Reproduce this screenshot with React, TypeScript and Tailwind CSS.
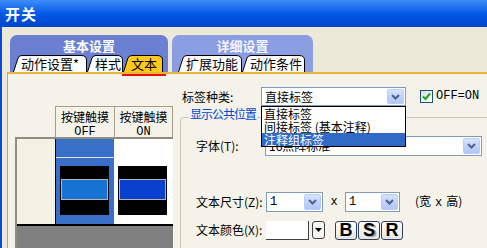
import React from "react";

function Tab({ label, w, className, active }: { label: string; w: number; className: string; active?: boolean }) {
  const d = `M0.5 17 L5 3 Q6 0.5 9 0.5 L${w - 6} 0.5 Q${w - 0.5} 0.5 ${w - 0.5} 5 L${w - 0.5} 17`;
  return (
    <div className={`relative h-[17px] shrink-0 ${className}`}>
      <svg className="absolute inset-0" width={w} height={17}>
        <path d={d} fill={active ? "#FFC81E" : "#FFFFFF"} stroke="#000" strokeWidth="1" />
      </svg>
      <span className="relative block pl-[8px] leading-[17px] text-[13px] whitespace-nowrap">{label}</span>
    </div>
  );
}

function Arrow() {
  return (
    <div className="w-[17px] shrink-0 rounded-[2px] border border-[#B9CDF8] bg-gradient-to-b from-[#D6E2FD] to-[#B0C6F6] flex items-center justify-center">
      <svg width="9" height="6" viewBox="0 0 9 6">
        <path d="M1 1 L4.5 4.5 L8 1" stroke="#4D6185" strokeWidth="2" fill="none" />
      </svg>
    </div>
  );
}

function Combo({ text, className, mono }: { text: string; className: string; mono?: boolean }) {
  return (
    <div className={`flex shrink-0 border border-[#7F9DB9] bg-white p-[1px] ${className}`}>
      <span className={`flex-1 pl-[2px] leading-[16px] whitespace-nowrap overflow-hidden ${mono ? "font-['Liberation_Mono',monospace]" : ""}`}>{text}</span>
      <Arrow />
    </div>
  );
}

function Swatch({ bar }: { bar: string }) {
  return (
    <div className="w-[49px] h-[49px] bg-black pt-[13px] px-[1px]">
      <div className={`h-[21px] border border-[#B4B4B4] ${bar}`} />
    </div>
  );
}

function StyleButton({ children, shadow }: { children: React.ReactNode; shadow?: boolean }) {
  return (
    <div
      className={`w-[22px] h-[19px] rounded-[3px] border border-[#2B3F5F] bg-gradient-to-b from-white to-[#E4E4DE] flex items-center justify-center font-['Liberation_Sans',sans-serif] font-black text-[18px] leading-none ${shadow ? "[text-shadow:2px_1px_0_#9A9A9A]" : ""}`}
    >
      {children}
    </div>
  );
}

export default function App() {
  return (
    <div className="w-[487px] h-[248px] overflow-hidden bg-[#ECE9D8] flex flex-col font-['Noto_Sans_CJK_SC',sans-serif] text-[12px] text-black">
      {/* title bar */}
      <div className="h-[27px] shrink-0 bg-gradient-to-b from-[#3D8DF6] via-[#0058E6] to-[#0044CC] flex items-center pl-[5px]">
        <span className="text-white font-bold text-[15px] leading-none tracking-[1px]">开关</span>
      </div>

      <div className="flex-1 min-h-0 flex flex-col border-l-2 border-[#0A4AD8]">
        {/* tab groups */}
        <div className="flex gap-[4px] pl-[8px] pt-[8px] shrink-0">
          <div className="w-[158px] h-[37px] rounded-t-[7px] bg-[#6B80D3] flex flex-col">
            <div className="h-[20px] text-center text-white font-bold leading-[21px] text-[13px]">基本设置</div>
            <div className="flex pl-[3px]">
              <Tab w={74} className="w-[74px]" label="动作设置*" />
              <Tab w={36} className="w-[36px]" label="样式" />
              <Tab w={40} className="w-[40px]" label="文本" active />
            </div>
          </div>
          <div className="w-[141px] h-[37px] rounded-t-[7px] bg-[#8C9EE2] flex flex-col">
            <div className="h-[20px] text-center text-[#F4F6FF] font-bold leading-[21px] text-[13px]">详细设置</div>
            <div className="flex pl-[6px]">
              <Tab w={64} className="w-[64px]" label="扩展功能" />
              <Tab w={63} className="w-[63px]" label="动作条件" />
            </div>
          </div>
        </div>

        {/* panel */}
        <div className="flex-1 min-h-0 ml-[5px] border-l border-t-2 border-l-[#A9A79A] border-t-[#E9B73A] bg-[#F5F3E9] relative flex">
          <div className="absolute top-0 left-[114px] w-[44px] h-[2px] bg-[#E8120C]" />

          {/* preview table */}
          <div className="w-[165px] shrink-0 pl-[7px] pt-[32px] flex flex-col">
            <div className="ml-[40px] w-[118px] h-[31px] flex border border-b-0 border-[#A39F8C]">
              <div className="w-[59px] border-r border-[#A39F8C] text-center leading-[13px] pt-[3px]">
                按键触摸<br /><span className="font-['Liberation_Mono',monospace]">OFF</span>
              </div>
              <div className="flex-1 text-center leading-[13px] pt-[3px]">
                按键触摸<br /><span className="font-['Liberation_Mono',monospace]">ON</span>
              </div>
            </div>
            <div className="flex-1 w-[158px] border-t-2 border-l-2 border-[#8F8C80] bg-[#808080] flex flex-col">
              <div className="h-[87px] flex border-b-2 border-black">
                <div className="w-[39px] bg-[#F3F1E4] border-r border-black" />
                <div className="w-[58px] bg-[#3A6FC8] flex flex-col">
                  <div className="h-[18px]" />
                  <div className="h-[1px] bg-[#DCE6F6]" />
                  <div className="flex-1 pl-[4px] pt-[8px]">
                    <Swatch bar="bg-[#1673D2]" />
                  </div>
                </div>
                <div className="flex-1 bg-white flex flex-col">
                  <div className="h-[19px]" />
                  <div className="flex-1 pl-[4px] pt-[8px]">
                    <Swatch bar="bg-[#0A40CE]" />
                  </div>
                </div>
              </div>
            </div>
          </div>

          {/* form */}
          <div className="flex-1 min-w-0 pl-[7px] pt-[13px] flex flex-col relative">
            <div className="flex items-center h-[19px] pl-[2px]">
              <span className="w-[79px] shrink-0 leading-[19px]">标签种类:</span>
              <Combo text="直接标签" className="w-[145px] h-[19px]" />
              <div className="ml-[14px] w-[13px] h-[13px] border border-[#1C5180] bg-gradient-to-br from-[#DCDCD7] to-white flex items-center justify-center">
                <svg width="9" height="9" viewBox="0 0 9 9">
                  <path d="M1 4.5 L3.5 7 L8 1.5" stroke="#21A121" strokeWidth="2" fill="none" />
                </svg>
              </div>
              <span className="ml-[3px] text-[12px] leading-[19px] whitespace-nowrap font-['Liberation_Mono',monospace]">OFF=ON</span>
            </div>

            {/* open list */}
            <div className="absolute left-[88px] top-[32px] w-[145px] border border-black bg-white z-10 text-[12px]">
              <div className="h-[13px] flex items-center pl-[2px] whitespace-nowrap">
                <span className="leading-none">直接标签</span>
              </div>
              <div className="h-[13px] flex items-center pl-[2px] whitespace-nowrap">
                <span className="leading-none">间接标签 (基本注释)</span>
              </div>
              <div className="h-[13px] flex items-center pl-[2px] whitespace-nowrap bg-[#316AC5] text-white">
                <span className="leading-none">注释组标签</span>
              </div>
            </div>

            {/* group box */}
            <div className="mt-[11px] w-[330px] flex-1 relative border-t border-l border-[#CBC8B6] rounded-tl-[4px] pl-[15px] pt-[18px] flex flex-col">
              <span className="absolute top-[-12px] left-[8px] px-[1px] bg-[#F5F3E9] text-[#0046D5] text-[12px] leading-[16px] tracking-[-1px]">显示公共位置</span>

              <div className="flex items-center h-[20px]">
                <span className="w-[69px] shrink-0">字体(T):</span>
                <Combo text="16点阵标准" className="w-[217px] h-[20px]" />
              </div>

              <div className="flex items-center h-[20px] mt-[36px]">
                <span className="w-[70px] shrink-0 whitespace-nowrap">文本尺寸(Z):</span>
                <Combo text="1" mono className="w-[57px] h-[20px]" />
                <span className="w-[22px] text-center font-['Liberation_Mono',monospace]">x</span>
                <Combo text="1" mono className="w-[55px] h-[20px]" />
                <span className="ml-[15px] whitespace-nowrap">(宽<span className="px-[4px] font-['Liberation_Mono',monospace]">x</span>高)</span>
              </div>

              <div className="flex items-center h-[20px] mt-[8px]">
                <span className="w-[70px] shrink-0 whitespace-nowrap">文本颜色(X):</span>
                <div className="w-[43px] h-[19px] bg-white border-b border-r border-[#404040]" />
                <div className="ml-[3px] w-[13px] h-[18px] rounded-[3px] border border-[#404040] bg-[#F4F4F0] flex items-center justify-center">
                  <svg width="7" height="4" viewBox="0 0 7 4">
                    <path d="M0 0 L7 0 L3.5 4 Z" fill="#000" />
                  </svg>
                </div>
                <div className="ml-[10px] flex gap-[1px]">
                  <StyleButton>B</StyleButton>
                  <StyleButton shadow>S</StyleButton>
                  <StyleButton>R</StyleButton>
                </div>
              </div>
            </div>
          </div>
        </div>
      </div>
    </div>
  );
}
